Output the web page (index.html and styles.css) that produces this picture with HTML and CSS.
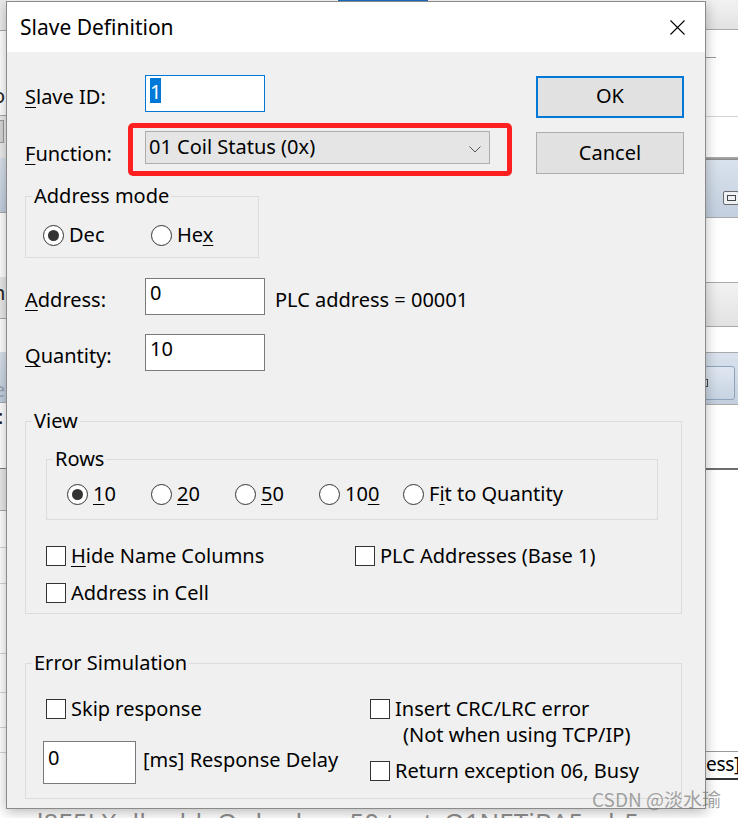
FILE: index.html
```html
<!DOCTYPE html>
<html lang="en">
<head>
<meta charset="utf-8">
<title>Slave Definition</title>
<link rel="stylesheet" href="styles.css">
</head>
<body>
<div class="desk">
  <div class="desk-main">
    <div class="app app-left">
      <div class="st gray"></div>
      <div class="ln"></div>
      <div class="st white"><span class="frag frag-o">o</span></div>
      <div class="ln"></div>
      <div class="st gray"><div class="lbtn"></div></div>
      <div class="st band"></div>
      <div class="ln"></div>
      <div class="st white"></div>
      <div class="st gray2"><span class="frag frag-n">n</span></div>
      <div class="ln"></div>
      <div class="st white"></div>
      <div class="st band"><span class="frag frag-re">re</span></div>
      <div class="ln"></div>
      <div class="st white"><span class="frag frag-colon">:</span></div>
      <div class="ln dark"></div>
      <div class="st gray2"></div>
      <div class="ln"></div>
      <div class="st white"></div>
      <div class="ln light"></div>
      <div class="st white"></div>
      <div class="ln light"></div>
      <div class="st white"></div>
      <div class="ln light"></div>
      <div class="st white"></div>
      <div class="ln light"></div>
      <div class="st white"></div>
      <div class="ln light"></div>
      <div class="st white"></div>
      <div class="ln light"></div>
      <div class="st white"></div>
    </div>
    <div class="desk-mid"><div class="topstrip"></div></div>
    <div class="app app-right">
      <div class="st grad"></div>
      <div class="ln"></div>
      <div class="st white"><div class="rshort"></div></div>
      <div class="ln light"></div>
      <div class="st white"></div>
      <div class="ln thick"></div>
      <div class="st band"><div class="ricon"><div class="ricon-in"></div></div></div>
      <div class="ln"></div>
      <div class="st white"></div>
      <div class="ln"></div>
      <div class="st grad"></div>
      <div class="ln"></div>
      <div class="st white"></div>
      <div class="ln"></div>
      <div class="st band"><div class="rbtn"><div class="ricon-in small"></div></div></div>
      <div class="ln"></div>
      <div class="st white"></div>
      <div class="ln thick2"></div>
      <div class="st white"></div>
      <div class="st ess">ess]</div>
      <div class="st white"></div>
    </div>
  </div>
  <div class="desk-text">e, d8E5LXnlbmbleQ.shadow_50.text_Q1NETiBA5rah5r</div>
</div>

<div class="dialog">
  <div class="titlebar">
    <span class="title">Slave Definition</span>
    <svg class="close" width="15" height="15" viewBox="0 0 15 15"><path d="M0.5 0.5L14.5 14.5M14.5 0.5L0.5 14.5" stroke="#000" stroke-width="1.1" fill="none"/></svg>
  </div>
  <div class="content">
    <div class="top">
      <div class="fields">
        <div class="row">
          <span class="lbl pad7"><u>S</u>lave ID:</span>
          <div class="edit focus"><span class="sel">1</span></div>
        </div>
        <div class="row row-fn">
          <span class="lbl pad9"><u>F</u>unction:</span>
          <div class="combo">
            <span class="combo-text">01 Coil Status (0x)</span>
            <svg class="chev" width="12" height="7" viewBox="0 0 12 7"><path d="M0.5 0.5L6 6L11.5 0.5" stroke="#555" stroke-width="1" fill="none"/></svg>
            <span class="mark"></span>
          </div>
        </div>
      </div>
      <div class="buttons">
        <div class="btn btn-ok">OK</div>
        <div class="btn btn-cancel">Cancel</div>
      </div>
    </div>

    <fieldset class="grp grp-addr">
      <legend>Address mode</legend>
      <div class="radios radios-addr">
        <span class="opt"><span class="radio on"></span><span>Dec</span></span>
        <span class="opt"><span class="radio"></span><span>He<u>x</u></span></span>
      </div>
    </fieldset>

    <div class="row row-addr">
      <span class="lbl pad8"><u>A</u>ddress:</span>
      <div class="edit">0</div>
      <span class="plc">PLC address = 00001</span>
    </div>
    <div class="row row-qty">
      <span class="lbl pad8"><u>Q</u>uantity:</span>
      <div class="edit">10</div>
    </div>

    <fieldset class="grp grp-view">
      <legend>View</legend>
      <fieldset class="grp grp-rows">
        <legend>Rows</legend>
        <div class="radios radios-rows">
          <span class="opt"><span class="radio on"></span><span><u>1</u>0</span></span>
          <span class="opt"><span class="radio"></span><span><u>2</u>0</span></span>
          <span class="opt"><span class="radio"></span><span><u>5</u>0</span></span>
          <span class="opt"><span class="radio"></span><span>10<u>0</u></span></span>
          <span class="opt"><span class="radio"></span><span>F<u>i</u>t to Quantity</span></span>
        </div>
      </fieldset>
      <div class="checks">
        <span class="chk"><span class="box"></span><span><u>H</u>ide Name Columns</span></span>
        <span class="chk"><span class="box"></span><span>PLC Addresses (Base 1)</span></span>
        <span class="chk"><span class="box"></span><span>Address in Cell</span></span>
      </div>
    </fieldset>

    <fieldset class="grp grp-err">
      <legend>Error Simulation</legend>
      <div class="err">
        <div class="err-left">
          <span class="chk"><span class="box"></span><span>Skip response</span></span>
          <div class="delay">
            <div class="edit edit-delay">0</div>
            <span class="delay-lbl">[ms] Response Delay</span>
          </div>
        </div>
        <div class="err-right">
          <span class="chk chk-two"><span class="box"></span><span class="two"><span class="line">Insert CRC/LRC error</span><span class="line line2">(Not when using TCP/IP)</span></span></span>
          <span class="chk chk-ret"><span class="box"></span><span>Return exception 06, Busy</span></span>
        </div>
      </div>
    </fieldset>
  </div>
</div>

<div class="watermark">CSDN @淡水瑜</div>
</body>
</html>
```
FILE: styles.css
```css
* { box-sizing: border-box; }
html, body { margin: 0; padding: 0; }
body {
  width: 738px;
  height: 818px;
  overflow: hidden;
  position: relative;
  background: #fff;
  font-family: "Noto Sans", "Liberation Sans", sans-serif;
  font-size: 20px;
  line-height: 28px;
  color: #000;
}

/* ---------- background windows ---------- */
.desk { display: flex; flex-direction: column; height: 818px; }
.desk-main { display: flex; height: 807px; flex: none; }
.desk-mid { flex: 1; }
.topstrip { margin-left: 331px; width: 90px; height: 1px; background: #1d6fc4; }
.app { display: grid; overflow: hidden; }
.app-left {
  width: 7px;
  grid-template-rows: 30px 1px 84px 1px 42px 54px 1px 64px 41px 1px 33px 50px 1px 65px 1px 41px 1px 36px 1px 35px 1px 69px 1px 38px 1px 34px 1px 24px 1px 1fr;
}
.app-right {
  width: 32px;
  grid-template-rows: 29px 1px 86px 1px 40px 3px 57px 1px 64px 1px 43px 1px 25px 1px 51px 1px 63px 2px 281px 29px 1fr;
}
.st { overflow: hidden; }
.white { background: #fff; }
.gray { background: #ececec; }
.gray2 { background: #e9e9e9; }
.grad { background: linear-gradient(#f2f2f2, #e2e2e2); }
.band { background: linear-gradient(#d9e2ed, #c3cfdf); }
.ln { background: #a9a9a9; }
.ln.light { background: #d4d4d4; }
.ln.dark { background: #7c7c7c; }
.ln.thick { background: linear-gradient(#b0b0b0, #888); }
.ln.thick2 { background: #6d6d6d; }
.lbtn { margin-top: 4px; width: 4px; height: 23px; background: #d6d6d6; border: 1px solid #9a9a9a; border-left: 0; }
.frag { display: block; margin-left: -7px; color: #222; font-size: 20px; line-height: 28px; }
.frag-o { padding-top: 51px; }
.frag-n { padding-top: 2px; }
.frag-re { padding-top: 24px; margin-left: -14px; color: #9aa6b4; }
.frag-colon { padding-top: 0; margin-left: -2px; }
.rshort { margin-top: 27px; width: 10px; height: 1px; background: #9a9a9a; }
.ricon { margin: 31px 0 0 17px; width: 16px; height: 14px; border: 1px solid #6a6a6a; border-radius: 2px; background: #eef1f5; display: flex; align-items: center; justify-content: center; }
.ricon-in { width: 9px; height: 6px; border: 1px solid #444; }
.ricon-in.small { width: 8px; height: 8px; margin-left: -4px; }
.rbtn { margin: 13px 0 0 -3px; width: 32px; height: 34px; border: 1px solid #8fa3bb; border-radius: 3px; background: linear-gradient(#dfe7f1, #c7d3e2); display: flex; align-items: center; }
.ess { background: #fff; border-top: 1px solid #9a9a9a; border-bottom: 2px solid #333; font-size: 19px; line-height: 24px; padding-left: 0; letter-spacing: -0.3px; }
.desk-text {
  height: 11px;
  overflow: hidden;
  white-space: nowrap;
  margin-left: -1px;
  font-size: 26px;
  line-height: 30px;
  color: #8f8f8f;
}

/* ---------- dialog ---------- */
.dialog {
  position: absolute;
  left: 6px;
  top: 1px;
  width: 700px;
  height: 808px;
  border: 1px solid #8a8a8a;
  background: #f0f0f0;
  box-shadow: 0 3px 12px rgba(0, 0, 0, 0.28);
  display: flex;
  flex-direction: column;
}
.titlebar {
  height: 50px;
  flex: none;
  background: #fff;
  display: flex;
  justify-content: space-between;
  align-items: flex-start;
  padding: 11px 0 0 13px;
}
.title { font-size: 21px; line-height: 28px; }
.close { margin: 7px 20px 0 0; }

.content {
  flex: 1;
  padding: 0 21px 10px 18px;
  display: flex;
  flex-direction: column;
}
u { text-decoration-thickness: 1px; text-underline-offset: 3px; }

.top { display: flex; justify-content: space-between; }
.fields { display: flex; flex-direction: column; padding-top: 23px; }
.row { display: flex; align-items: flex-start; }
.lbl { width: 120px; flex: none; }
.pad7 { padding-top: 8px; }
.pad8 { padding-top: 8px; }
.pad9 { padding-top: 9px; }

.edit {
  width: 120px;
  height: 37px;
  background: #fff;
  border: 1px solid #7a7a7a;
  padding: 0 0 0 4px;
  display: flex;
  align-items: flex-start;
}
.edit.focus { border-color: #0078d7; }
.sel {
  margin-top: 2px;
  height: 25px;
  line-height: 28px;
  overflow: hidden;
  background: #0078d7;
  color: #fff;
}

.row-fn { margin-top: 19px; }
.combo {
  position: relative;
  width: 345px;
  height: 33px;
  background: #e5e5e5;
  border: 1px solid #adadad;
  padding: 1px 0 0 3px;
  display: flex;
  justify-content: space-between;
  align-items: flex-start;
}
.chev { margin: 13px 8px 0 0; }
.mark {
  position: absolute;
  left: -18px;
  top: -9px;
  right: -23px;
  bottom: -13px;
  border: 5px solid #fe2020;
  border-radius: 5px;
}

.buttons { width: 148px; padding-top: 24px; display: flex; flex-direction: column; gap: 14px; }
.btn {
  height: 42px;
  background: #e1e1e1;
  border: 1px solid #adadad;
  display: flex;
  align-items: center;
  justify-content: center;
}
.btn-ok { border: 2px solid #0078d7; padding-bottom: 2px; }

/* group boxes */
.grp { margin: 0; padding: 0; border: 1px solid #dcdcdc; min-width: 0; }
.grp legend { padding: 0 2px; margin-left: 6px; line-height: 28px; }
.grp-addr { width: 234px; margin-top: 8px; padding: 11px 0 8px 0; }
.grp-view { margin: 36px 2px 0 0; padding: 10px 0 6px 0; }
.grp-rows { width: 612px; margin-left: 20px; padding: 7px 0 11px 0; }
.grp-err { margin: 35px 2px 0 0; padding: 18px 0 13px 0; }

.radios { display: grid; }
.radios-addr { grid-template-columns: 108px auto; margin-left: 17px; }
.radios-rows { grid-template-columns: 84px 84px 84px 84px auto; margin-left: 20px; }
.opt { display: flex; align-items: center; gap: 5px; height: 28px; }
.radio {
  width: 21px;
  height: 21px;
  flex: none;
  border: 1px solid #333;
  border-radius: 50%;
  background: #fff;
  display: flex;
  align-items: center;
  justify-content: center;
}
.radio.on::after {
  content: "";
  width: 11px;
  height: 11px;
  border-radius: 50%;
  background: #333;
}

.row-addr { margin-top: 20px; }
.row-qty { margin-top: 19px; }
.plc { margin-left: 10px; padding-top: 8px; }

.checks { margin: 22px 0 0 20px; display: grid; grid-template-columns: 309px auto; row-gap: 9px; }
.chk { display: flex; align-items: flex-start; gap: 5px; }
.box {
  width: 20px;
  height: 20px;
  flex: none;
  margin-top: 4px;
  background: #fff;
  border: 1px solid #333;
}

.err { display: grid; grid-template-columns: 324px auto; margin-left: 20px; }
.err-left { display: flex; flex-direction: column; }
.delay { display: flex; align-items: flex-start; margin: 18px 0 0 -3px; }
.edit-delay { width: 93px; height: 43px; padding: 2px 0 0 4px; }
.delay-lbl { margin-left: 7px; padding-top: 5px; }
.err-right { display: flex; flex-direction: column; }
.chk-two { margin-top: 1px; line-height: 26px; }
.chk-two .box { margin-top: 3px; }
.two { display: flex; flex-direction: column; }
.line2 { padding-left: 8px; }
.chk-ret { margin-top: 9px; }

.watermark {
  position: absolute;
  left: 592px;
  top: 787px;
  font-family: "Noto Sans CJK SC", "Noto Sans", sans-serif;
  font-size: 19px;
  line-height: 24px;
  color: rgba(105, 105, 105, 0.6);
  white-space: nowrap;
}
```
